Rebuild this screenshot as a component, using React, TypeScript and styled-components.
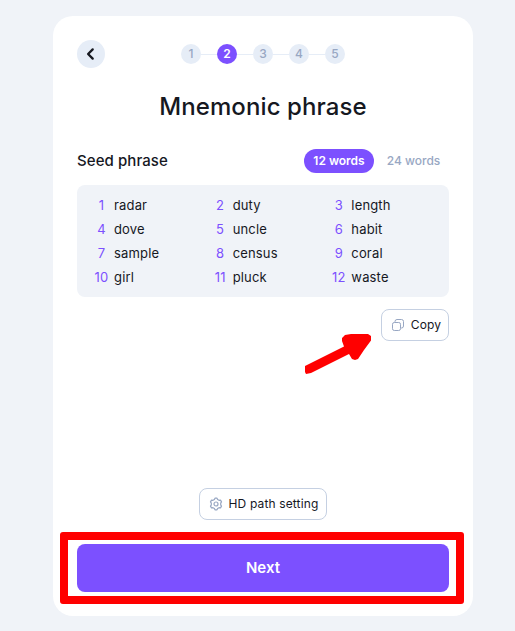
import React from "react";
import styled, { createGlobalStyle } from "styled-components";

const GlobalStyle = createGlobalStyle`
  *, *::before, *::after { box-sizing: border-box; }
  body {
    margin: 0;
    background: #f0f3f8;
    color: #16181f;
    font-family: Inter, "Liberation Sans", sans-serif;
  }
  button { font: inherit; color: inherit; border: 0; padding: 0; margin: 0; background: none; }
`;

const Page = styled.main`
  height: 631px;
  padding: 16px 42px 15px 53px;
  overflow: hidden;
`;

const Card = styled.section`
  position: relative;
  display: flex;
  flex-direction: column;
  width: 420px;
  height: 600px;
  padding: 24px;
  border-radius: 20px;
  background: #fff;
`;

const TopBar = styled.header`
  display: grid;
  grid-template-columns: 28px 1fr 28px;
  align-items: center;
  height: 28px;
`;

const BackButton = styled.button`
  display: flex;
  align-items: center;
  justify-content: center;
  width: 28px;
  height: 28px;
  border-radius: 50%;
  background: #e6edf7;
`;

const Steps = styled.ol`
  display: flex;
  align-items: center;
  justify-content: center;
  margin: 0;
  padding: 0;
  list-style: none;
`;

const Step = styled.li<{ $active: boolean }>`
  display: flex;
  align-items: center;
  justify-content: center;
  width: 20px;
  height: 20px;
  border-radius: 50%;
  font-size: 12px;
  line-height: 20px;
  font-weight: ${(p) => (p.$active ? 600 : 500)};
  color: ${(p) => (p.$active ? "#fff" : "#98a7c3")};
  background: ${(p) => (p.$active ? "#7c50ff" : "#e6edf7")};
`;

const StepLine = styled.li`
  width: 16px;
  height: 1px;
  background: #e6edf7;
`;

const Title = styled.h1`
  margin: 23px 0 0;
  font-size: 24px;
  line-height: 32px;
  font-weight: 500;
  letter-spacing: 0.1px;
  text-align: center;
`;

const PhraseHeader = styled.div`
  display: flex;
  align-items: center;
  justify-content: space-between;
  height: 24px;
  margin-top: 26px;
`;

const PhraseLabel = styled.h2`
  margin: 0;
  font-size: 15px;
  line-height: 24px;
  font-weight: 500;
  letter-spacing: 0.08px;
`;

const Toggle = styled.div`
  display: flex;
  gap: 4px;
`;

const ToggleOption = styled.button<{ $active: boolean }>`
  width: ${(p) => (p.$active ? 70 : 71)}px;
  height: 24px;
  border-radius: 12px;
  font-size: 12px;
  line-height: 24px;
  white-space: nowrap;
  font-weight: ${(p) => (p.$active ? 600 : 500)};
  color: ${(p) => (p.$active ? "#fff" : "#98a7c3")};
  background: ${(p) => (p.$active ? "#7c50ff" : "transparent")};
`;

const WordGrid = styled.div`
  display: grid;
  grid-template-columns: repeat(3, 1fr);
  grid-auto-rows: 24px;
  margin-top: 12px;
  padding: 8px;
  border-radius: 8px;
  background: #f0f3f8;
`;

const Word = styled.div`
  display: flex;
  align-items: center;
  gap: 3px;
  padding-left: 7px;
  font-size: 13px;
  line-height: 24px;
  letter-spacing: 0.16px;
`;

const WordIndex = styled.span`
  width: 19px;
  text-align: center;
  color: #7c50ff;
`;

const OutlineButton = styled.button<{ $width: number; $inset: number; $align: string }>`
  display: flex;
  align-items: center;
  justify-content: center;
  align-self: ${(p) => p.$align};
  gap: 6px;
  width: ${(p) => p.$width}px;
  height: 32px;
  padding-left: ${(p) => p.$inset}px;
  border: 1px solid #c5d0e2;
  border-radius: 8px;
  background: #fff;
  font-size: 12px;
  line-height: 20px;
  letter-spacing: 0.14px;
  white-space: nowrap;
`;

const CopyRow = styled.div`
  display: flex;
  justify-content: flex-end;
  margin-top: 12px;
`;

const Footer = styled.footer`
  display: flex;
  flex-direction: column;
  gap: 24px;
  margin-top: auto;
`;

const NextButton = styled.button`
  height: 48px;
  border-radius: 8px;
  background: #7c50ff;
  color: #fff;
  font-size: 15px;
  line-height: 24px;
  font-weight: 600;
`;

const HighlightFrame = styled.div`
  position: absolute;
  left: 7px;
  top: 516px;
  width: 404px;
  height: 72px;
  border: 8px solid #ff0000;
  border-radius: 3px;
  pointer-events: none;
`;

const PointerArrow = styled.svg`
  position: absolute;
  left: 251px;
  top: 317px;
  pointer-events: none;
`;

const words = [
  "radar", "duty", "length",
  "dove", "uncle", "habit",
  "sample", "census", "coral",
  "girl", "pluck", "waste",
];

const ChevronIcon = () => (
  <svg width="28" height="28" viewBox="0 0 28 28" fill="none">
    <path d="M15.7 9.4L11.1 14L15.7 18.6" stroke="#16181f" strokeWidth="2.3" strokeLinecap="round" strokeLinejoin="round" />
  </svg>
);

const CopyIcon = () => (
  <svg width="14" height="14" viewBox="0 0 14 14" fill="none" stroke="#98a7c3" strokeWidth="1">
    <rect x="1.5" y="4.5" width="8" height="8" rx="1.8" />
    <path d="M4 4.3V3.5A2 2 0 0 1 6 1.5H10.5A2 2 0 0 1 12.5 3.5V8A2 2 0 0 1 10.5 10H9.7" />
  </svg>
);

const GearIcon = () => (
  <svg width="14" height="14" viewBox="0 0 14 14" fill="none" stroke="#98a7c3" strokeWidth="1.2" strokeLinejoin="round">
    <path d="M5.4 2.5L6 1.2H8L8.6 2.5L10 3.3L11.5 3.1L12.5 4.9L11.7 6.1V7.9L12.5 9.1L11.5 10.9L10 10.7L8.6 11.5L8 12.8H6L5.4 11.5L4 10.7L2.5 10.9L1.5 9.1L2.3 7.9V6.1L1.5 4.9L2.5 3.1L4 3.3Z" />
    <circle cx="7" cy="7" r="2" />
  </svg>
);

export default function App() {
  return (
    <>
      <GlobalStyle />
      <Page>
        <Card>
          <TopBar>
            <BackButton aria-label="Back"><ChevronIcon /></BackButton>
            <Steps>
              {[1, 2, 3, 4, 5].map((n) => (
                <React.Fragment key={n}>
                  {n > 1 && <StepLine />}
                  <Step $active={n === 2}>{n}</Step>
                </React.Fragment>
              ))}
            </Steps>
          </TopBar>
          <Title>Mnemonic phrase</Title>
          <PhraseHeader>
            <PhraseLabel>Seed phrase</PhraseLabel>
            <Toggle>
              <ToggleOption $active>12 words</ToggleOption>
              <ToggleOption $active={false}>24 words</ToggleOption>
            </Toggle>
          </PhraseHeader>
          <WordGrid>
            {words.map((word, i) => (
              <Word key={word}>
                <WordIndex>{i + 1}</WordIndex>
                <span>{word}</span>
              </Word>
            ))}
          </WordGrid>
          <CopyRow>
            <OutlineButton $width={68} $inset={2} $align="auto"><CopyIcon />Copy</OutlineButton>
          </CopyRow>
          <Footer>
            <OutlineButton $width={128} $inset={1} $align="center"><GearIcon />HD path setting</OutlineButton>
            <NextButton>Next</NextButton>
          </Footer>
          <HighlightFrame />
          <PointerArrow width="69" height="44" viewBox="304 333 69 44">
            <path
              d="M305 366L344 346.5L342 341V338L345 335L351 334H368L371 336V340.5L364 350L358 359L355 360L352 359L349 354L311 373L306 374L305 372Z"
              fill="#ff0000"
            />
          </PointerArrow>
        </Card>
      </Page>
    </>
  );
}
